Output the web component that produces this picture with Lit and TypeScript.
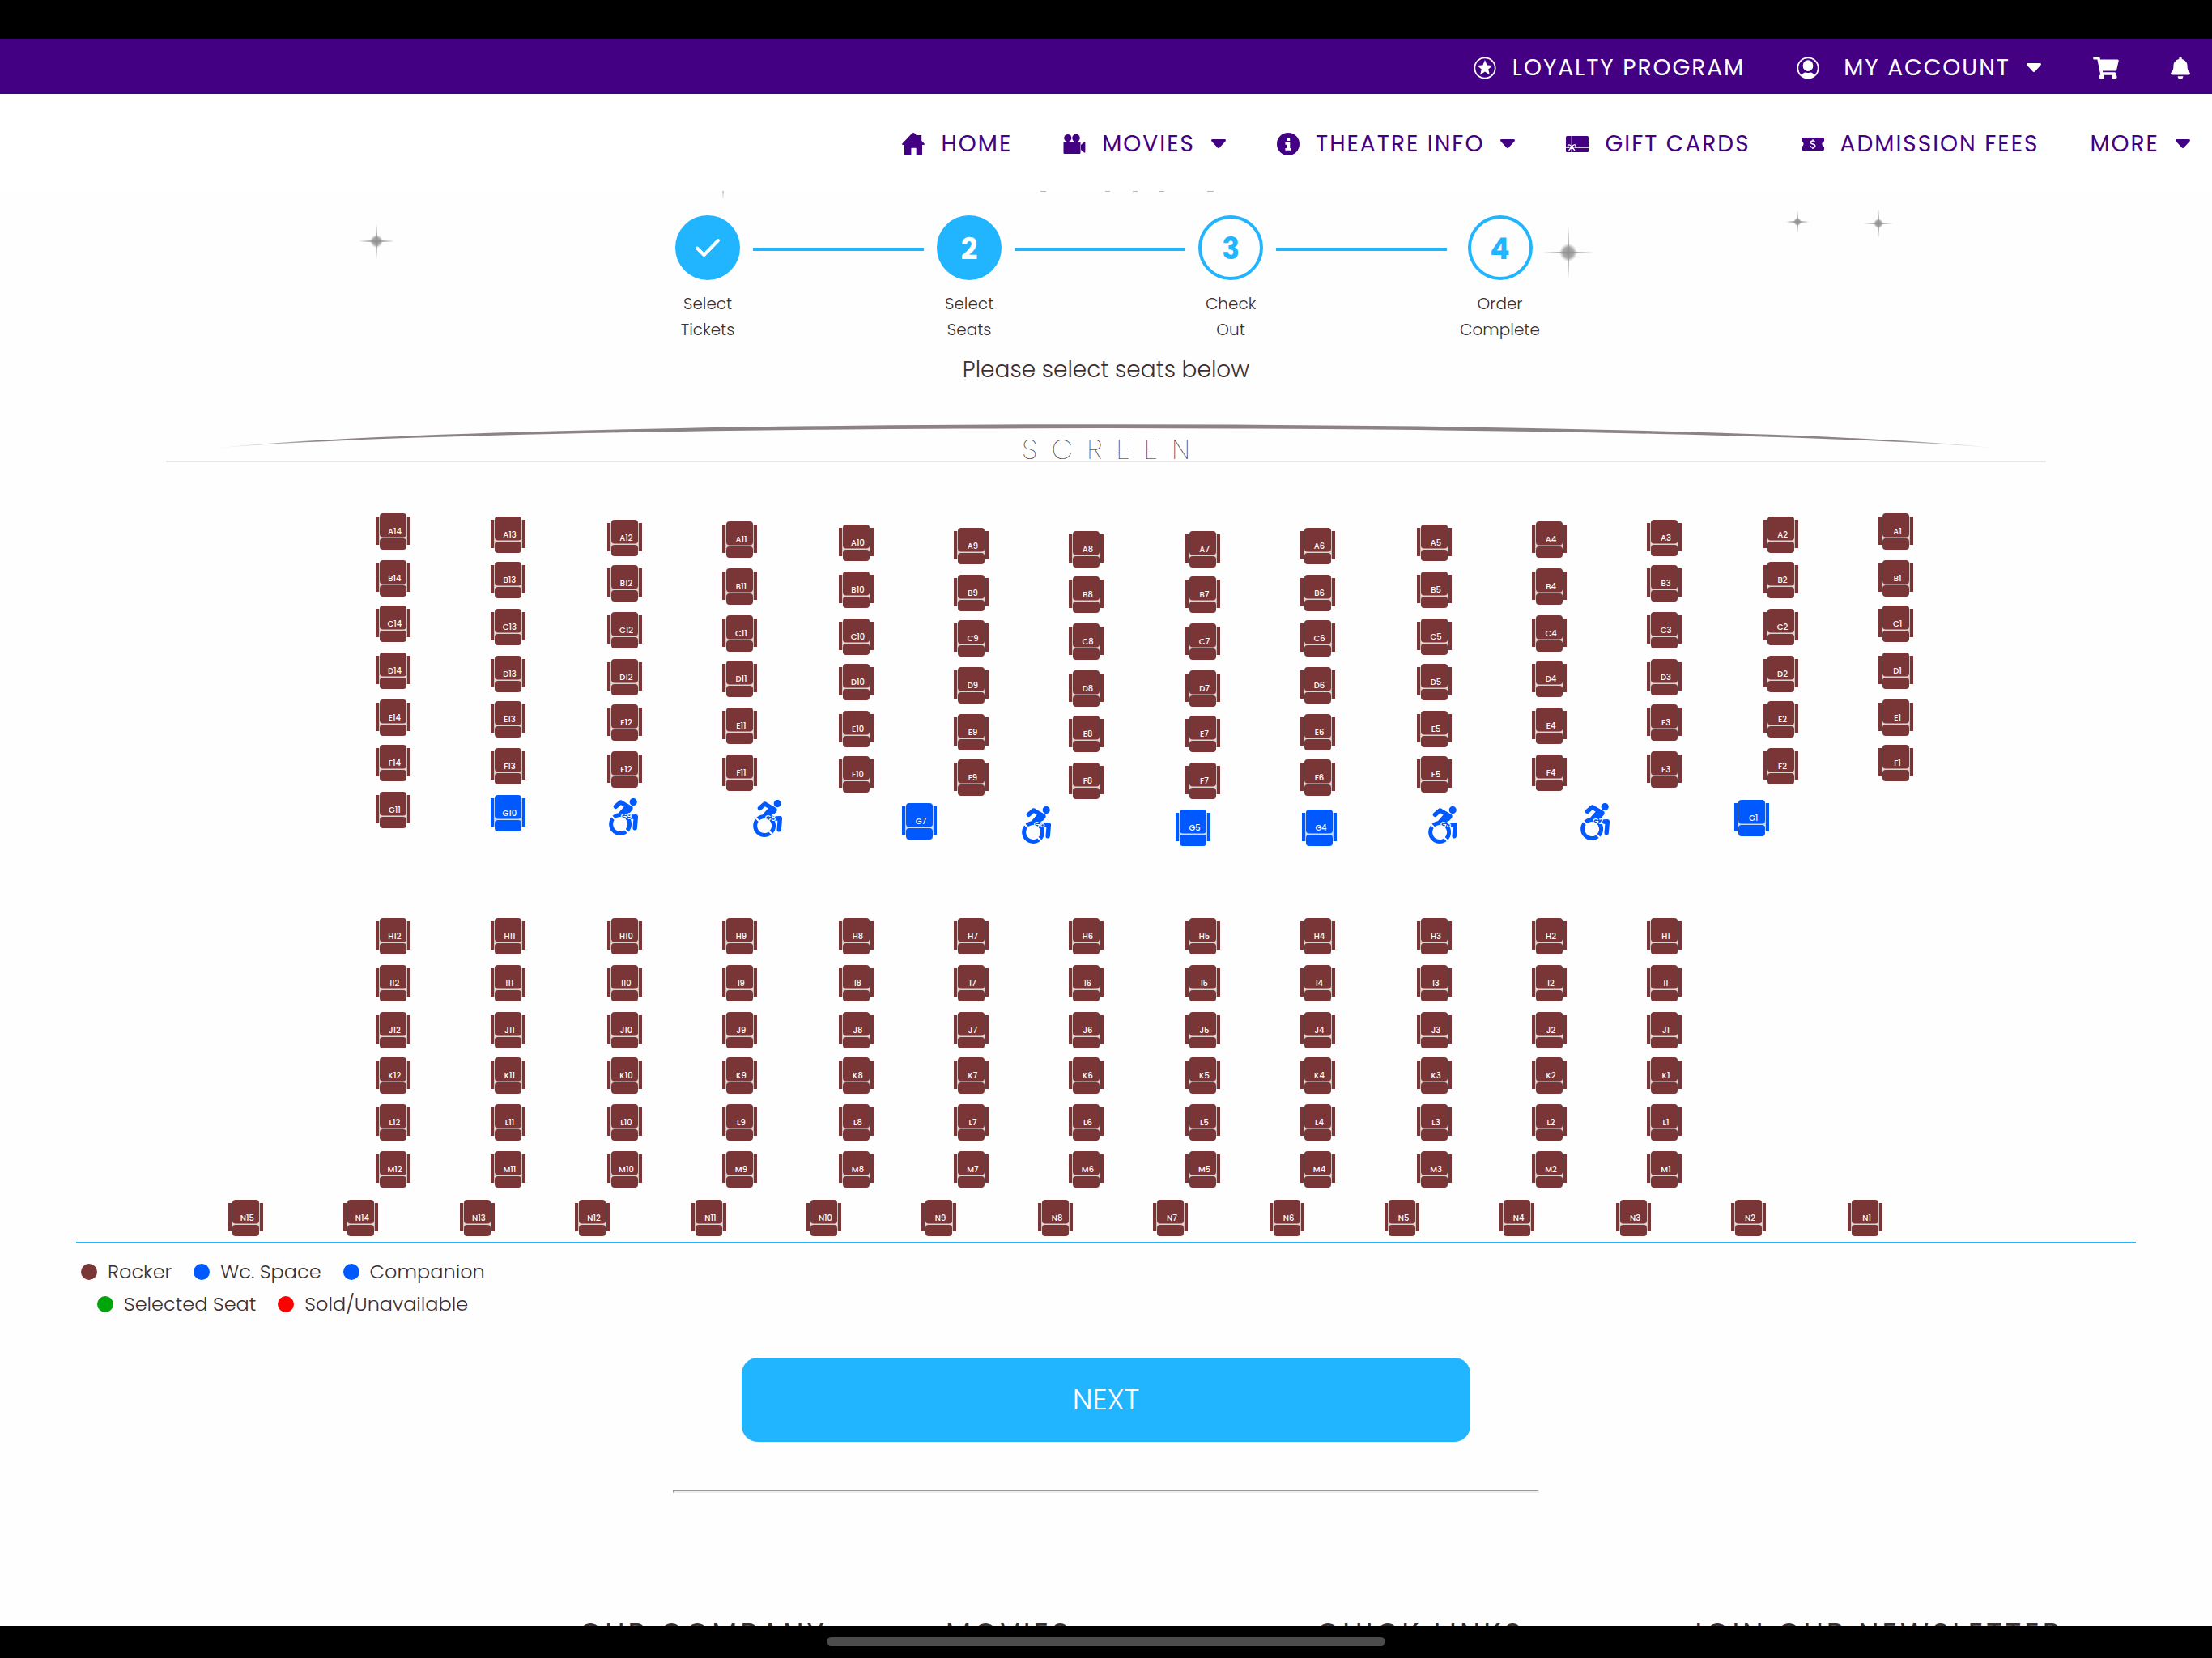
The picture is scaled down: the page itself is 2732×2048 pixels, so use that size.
import { LitElement, html, svg, css } from "lit";
import { customElement, property, state } from "lit/decorators.js";
import { classMap } from "lit/directives/class-map.js";
import { styleMap } from "lit/directives/style-map.js";

type SeatKind = "rocker" | "companion" | "wheelchair";

interface Seat {
  id: string;
  kind: SeatKind;
  x: number;
  y: number;
}

/* The plan is drawn on a floor 2544 units wide; x becomes a share of it. */
const PLAN_WIDTH = 2544;
const COLUMN_PITCH = 142.8;
const ROW_PITCH = 57.3;
const even = (n: number) => 2 * Math.round(n / 2);

function buildSeats(): Seat[] {
  const seats: Seat[] = [];
  "ABCDEF".split("").forEach((row, r) => {
    for (let i = 0; i < 14; i++) {
      const bow = 3.6 * Math.min(i, 13 - i);
      seats.push({
        id: `${row}${14 - i}`,
        kind: "rocker",
        x: even(370 + COLUMN_PITCH * i),
        y: even(24 + ROW_PITCH * r + bow),
      });
    }
  });
  const rowG: [number, SeatKind, number, number][] = [
    [11, "rocker", 370, 368],
    [10, "companion", 512, 372],
    [9, "wheelchair", 656, 376],
    [8, "wheelchair", 834, 378],
    [7, "companion", 1020, 382],
    [6, "wheelchair", 1166, 386],
    [5, "companion", 1358, 390],
    [4, "companion", 1514, 390],
    [3, "wheelchair", 1668, 386],
    [2, "wheelchair", 1856, 382],
    [1, "companion", 2048, 378],
  ];
  for (const [n, kind, x, y] of rowG) seats.push({ id: `G${n}`, kind, x, y });
  "HIJKLM".split("").forEach((row, r) => {
    for (let i = 0; i < 12; i++) {
      seats.push({
        id: `${row}${12 - i}`,
        kind: "rocker",
        x: even(370 + COLUMN_PITCH * i),
        y: even(524.7 + ROW_PITCH * r),
      });
    }
  });
  for (let i = 0; i < 15; i++) {
    seats.push({ id: `N${15 - i}`, kind: "rocker", x: even(188 + COLUMN_PITCH * i), y: 872 });
  }
  return seats;
}

const icons = {
  loyalty: svg`<svg class="i28" viewBox="0 0 28 28" aria-hidden="true">
    <circle cx="14" cy="14" r="12.7" fill="none" stroke="currentColor" stroke-width="1.8"/>
    <path fill="currentColor" d="M14 4l2.600 6.500 7 .5-5.400 4.500 1.700 6.900-5.900-3.800-5.900 3.800 1.700-6.900L4.400 11l7-.5z"/></svg>`,
  user: svg`<svg class="i28" viewBox="0 0 28 28" aria-hidden="true">
    <circle cx="14" cy="14" r="12.7" fill="none" stroke="currentColor" stroke-width="1.8"/>
    <ellipse cx="14" cy="11.200" rx="6.400" ry="6.900" fill="currentColor"/>
    <path fill="currentColor" d="M5.800 23.600c1-2.600 3.200-4.200 5-4.200 1 0 1.600.6 3.200.6s2.200-.6 3.200-.6c1.800 0 4 1.600 5 4.200C20 25.800 17.200 27 14 27s-6-1.200-8.200-3.400z"/></svg>`,
  cart: svg`<svg class="i32" viewBox="0 0 576 512" aria-hidden="true"><path fill="currentColor" d="M528.12 301.319l47.273-208C578.806 78.301 567.391 64 551.99 64H159.208l-9.166-44.81C147.758 8.021 137.93 0 126.529 0H24C10.745 0 0 10.745 0 24v16c0 13.255 10.745 24 24 24h69.883l70.248 343.435C147.325 417.1 136 435.222 136 456c0 30.928 25.072 56 56 56s56-25.072 56-56c0-15.674-6.447-29.835-16.824-40h209.647C430.447 426.165 424 440.326 424 456c0 30.928 25.072 56 56 56s56-25.072 56-56c0-22.172-12.888-41.332-31.579-50.405l5.517-24.276c3.413-15.018-8.002-29.319-23.403-29.319H218.117l-6.545-32h293.145c11.206 0 20.92-7.754 23.403-18.681z"/></svg>`,
  bell: svg`<svg class="i24" viewBox="0 0 448 512" aria-hidden="true"><path fill="currentColor" d="M224 512c35.32 0 63.97-28.65 63.97-64H160.03c0 35.35 28.65 64 63.97 64zm215.39-149.71c-19.32-20.76-55.47-51.99-55.47-154.29 0-77.7-54.48-139.9-127.94-155.16V32c0-17.67-14.32-32-31.98-32s-31.98 14.33-31.98 32v20.84C118.56 68.1 64.08 130.3 64.08 208c0 102.3-36.15 133.53-55.47 154.29-6 6.45-8.66 14.16-8.61 21.71.11 16.4 12.98 32 32.1 32h383.8c19.12 0 32-15.6 32.1-32 .05-7.55-2.61-15.27-8.61-21.71z"/></svg>`,
  home: svg`<svg class="i28" viewBox="0 0 28 28" aria-hidden="true"><path fill="currentColor" d="M14 0c.7 0 1.200.200 1.700.700L19 4.200V3h5.200v6.700l3.500 3.900c.5.600.2 1.400-.6 1.400H25v12c0 .6-.4 1-1 1h-6.300v-8.200c0-.6-.4-1-1-1h-4.300c-.6 0-1 .4-1 1V28H4c-.6 0-1-.4-1-1V15H.900c-.8 0-1.100-.8-.6-1.400L12.300.700C12.800.200 13.300 0 14 0z"/></svg>`,
  camera: svg`<svg class="i28" viewBox="0 0 28 28" aria-hidden="true"><g fill="currentColor">
    <circle cx="5.800" cy="6.600" r="4.600"/><circle cx="16" cy="6.600" r="4.800"/>
    <rect x="0.500" y="11" width="21" height="15" rx="1"/><path d="M22 15l4-3.600h1.400v13.200H26L22 21z"/></g></svg>`,
  info: svg`<svg class="i28" viewBox="0 0 28 28" aria-hidden="true"><circle cx="14" cy="14" r="14" fill="currentColor"/>
    <path fill="#fff" d="M12 6h4.200v4H12zM10.400 12h5.900v7h1.700v2.800h-7.600V19h1.800v-4.200h-1.800z"/></svg>`,
  gift: svg`<svg class="i28" viewBox="0 0 28 28" aria-hidden="true"><rect x="0" y="4" width="28" height="20" rx="1.500" fill="currentColor"/>
    <path fill="none" stroke="#fff" stroke-width="1.200" d="M7.300 4v11M0 18.200h4M11 18.200h17"/>
    <g fill="none" stroke="#fff" stroke-width="1.300"><path d="M7 17.500c-1-3-4.600-3.600-4.600-1.200 0 1.800 2.800 2 4.600 1.200zM7.600 17.500c1-3 4.600-3.600 4.600-1.200 0 1.800-2.800 2-4.600 1.200zM6.600 18l-3 4M8 18l3 4M7.300 18v6"/></g></svg>`,
  ticket: svg`<svg class="i28" viewBox="0 0 28 28" aria-hidden="true"><path fill="currentColor" d="M1.500 6h25c.8 0 1.500.6 1.500 1.400v3.200c-3.400.8-3.400 6 0 6.800v3.200c0 .8-.7 1.400-1.500 1.400h-25C.700 22 0 21.400 0 20.600v-3.200c3.400-.8 3.400-6 0-6.800V7.400C0 6.600.700 6 1.500 6z"/>
    <path fill="none" stroke="#fff" stroke-width="1.400" d="M16.600 11.800c-.4-1.200-1.300-1.800-2.600-1.800-1.500 0-2.600.8-2.600 2 0 2.800 5.400 1.200 5.400 4.200 0 1.200-1.200 2-2.800 2-1.500 0-2.500-.7-2.900-2M14 8.200V10M14 18.200V20"/></svg>`,
  caret: svg`<svg class="caret" viewBox="0 0 18 11" aria-hidden="true"><path fill="currentColor" d="M1.500 0h15c1.300 0 2 1.400 1 2.400L10.200 10.500c-.7.700-1.700.7-2.400 0L.5 2.400C-.5 1.400.2 0 1.500 0z"/></svg>`,
  check: svg`<svg class="i32" viewBox="0 0 32 24" aria-hidden="true"><path fill="none" stroke="#fff" stroke-width="4" stroke-linecap="round" stroke-linejoin="round" d="M3 12.500l8.500 8.500L29 3"/></svg>`,
};

const wheelchairPath =
  "M423.9 255.8L411 413.1c-3.3 40.7-63.9 35.1-60.6-4.9l10-122.5-41.1 2.3c10.1 20.7 15.8 43.9 15.8 68.5 0 41.2-16.1 78.7-42.3 106.5l-39.3-39.3c57.9-63.7 13.1-167.2-74-167.2-25.9 0-49.5 9.9-67.2 26L73 243.2c22-20.7 50.1-35.1 81.4-40.2l75.3-85.7-42.6-24.8-51.6 46c-30 26.8-70.6-18.5-40.5-45.4l68-60.7c9.8-8.8 24.1-10.2 35.5-3.6 0 0 139.3 80.9 139.5 81.1 16.2 10.1 20.7 36 6.1 52.6L285.7 229l106.1-5.9c18.5-1.1 33.6 14.4 32.1 32.7zm-64.9-154c28.1 0 50.9-22.8 50.9-50.9C409.9 22.8 387.1 0 359 0c-28.1 0-50.9 22.8-50.9 50.9 0 28.1 22.8 50.9 50.9 50.9zM179.6 456.5c-80.6 0-127.4-90.6-82.7-156.1l-39.7-39.7C36.4 287 24 320.3 24 356.4c0 130.7 150.7 201.4 251.4 122.5l-39.7-39.7c-16 10.9-35.3 17.3-56.1 17.3z";

@customElement("theatre-seat")
export class TheatreSeat extends LitElement {
  @property() label = "";
  @property() kind: SeatKind = "rocker";
  @property({ type: Boolean }) selected = false;

  static styles = css`
    :host {
      display: block;
      width: 44px;
      height: 46px;
    }
    .seat {
      display: block;
      position: relative;
      width: 100%;
      height: 100%;
      padding: 0;
      border: 0;
      background: none;
      cursor: pointer;
      color: #7a3636;
    }
    .accessible {
      color: #0059ff;
    }
    .selected {
      color: #00a50b;
    }
    .shape {
      display: block;
      width: 44px;
      height: 46px;
    }
    .label {
      position: absolute;
      left: 3px;
      right: 0;
      top: 16px;
      font: 500 10px/14px Poppins, Inter, sans-serif;
      text-align: center;
      color: #fff;
    }
  `;

  render() {
    const chair = this.kind === "wheelchair";
    return html`<button
      class=${classMap({ seat: true, accessible: this.kind !== "rocker", selected: this.selected })}
      aria-pressed=${this.selected}
    >
      ${chair
        ? svg`<svg class="shape" viewBox="0 0 44 46" aria-hidden="true">
            <g transform="scale(.0898)"><path fill="currentColor" d=${wheelchairPath}/></g></svg>`
        : svg`<svg class="shape" viewBox="0 0 44 46" aria-hidden="true">
            <rect x="4" y="4" width="35" height="35" fill="currentColor" opacity=".3"/>
            <rect x="5" y="26" width="33" height="8" fill="#fff" opacity=".3"/>
            <g fill="currentColor">
              <rect x="0" y="4" width="4" height="35"/><rect x="39" y="4" width="4" height="35"/>
              <rect x="5" y="0" width="33" height="29.500" rx="4"/>
              <rect x="5" y="31" width="33" height="14" rx="4"/>
            </g></svg>`}
      <span class="label">${this.label}</span>
    </button>`;
  }
}

@customElement("app-root")
export class AppRoot extends LitElement {
  @state() private selected = new Set<string>();
  private seats = buildSeats();

  static styles = css`
    :host {
      display: flex;
      flex-direction: column;
      height: 100vh;
      overflow: hidden;
      background: #fefefe;
      color: #3b2f30;
      font-family: Poppins, Inter, sans-serif;
      font-weight: 300;
    }
    a {
      color: inherit;
      text-decoration: none;
    }
    button {
      font: inherit;
      letter-spacing: inherit;
      color: inherit;
    }
    .device-top {
      flex: none;
      height: 48px;
      background: #000;
    }
    .account-bar,
    .main-nav {
      display: flex;
      flex: none;
      align-items: center;
      justify-content: flex-end;
      gap: 64px;
      box-sizing: border-box;
      padding: 3px 27px 0;
      font-size: 28px;
      font-weight: 400;
      letter-spacing: 2px;
    }
    .account-bar {
      height: 68px;
      background: #440082;
      color: #fff;
    }
    .main-nav {
      gap: 63px;
      height: 120px;
      background: #fff;
      color: #440082;
    }
    .item {
      display: flex;
      align-items: center;
      gap: 20px;
      padding: 0;
      border: 0;
      background: none;
      white-space: nowrap;
    }
    .account-name {
      padding-left: 10px;
    }
    .i28 {
      width: 28px;
      height: 28px;
    }
    .i32 {
      width: 32px;
      height: 28px;
    }
    .i24 {
      width: 24px;
      height: 28px;
    }
    .caret {
      width: 18px;
      height: 11px;
    }
    .page {
      position: relative;
      flex: 1;
      min-height: 0;
      overflow: hidden;
      display: flex;
      flex-direction: column;
      align-items: center;
    }
    .page > * {
      flex-shrink: 0;
    }
    .sky {
      position: absolute;
      left: 0;
      top: 0;
      width: 100%;
      height: 140px;
    }
    .steps {
      display: flex;
      align-items: flex-start;
      gap: 16px;
      margin: 30px 0 0;
      padding: 0 0 0 4px;
      list-style: none;
    }
    .step {
      display: flex;
      flex-direction: column;
      align-items: center;
      gap: 13px;
      min-width: 80px;
      font-size: 20px;
      line-height: 32px;
      text-align: center;
    }
    .badge {
      display: grid;
      place-items: center;
      box-sizing: border-box;
      width: 80px;
      height: 80px;
      border: 4px solid #21b4ff;
      border-radius: 50%;
      font-size: 36px;
      font-weight: 700;
      color: #21b4ff;
    }
    .number {
      padding-top: 3px;
    }
    .filled {
      background: #21b4ff;
      color: #fff;
    }
    .link {
      width: 211px;
      height: 4px;
      margin-top: 40px;
      background: #21b4ff;
    }
    .prompt {
      margin: 14px 0 0;
      font-size: 28px;
      font-weight: 300;
      line-height: 40px;
    }
    .screen {
      display: flex;
      flex-direction: column;
      align-items: center;
      box-sizing: border-box;
      width: 85%;
      margin-top: 47px;
      border-bottom: 2px solid #e6e6e6;
      color: #2a2021;
      font-size: 34px;
      font-weight: 200;
      line-height: 28px;
      letter-spacing: 18px;
      text-indent: 18px;
    }
    .arc {
      width: 95%;
      height: 30px;
      margin-bottom: -13px;
    }
    .floor {
      position: relative;
      width: 93.125%;
      height: 924px;
      margin-top: 39px;
      border-bottom: 2px solid #21b4ff;
    }
    .place {
      position: absolute;
    }
    .legend {
      display: grid;
      width: 93.125%;
      box-sizing: border-box;
      margin-top: 15px;
      padding-left: 6px;
      font-size: 24px;
      line-height: 40px;
    }
    .legend-row {
      display: flex;
      gap: 27px;
    }
    .indented {
      padding-left: 20px;
    }
    .key {
      display: flex;
      align-items: center;
      gap: 13px;
    }
    .dot {
      width: 20px;
      height: 20px;
      border-radius: 50%;
      background: #7a3636;
    }
    .blue {
      background: #0059ff;
    }
    .green {
      background: #00a50b;
    }
    .red {
      background: #f00;
    }
    .next {
      width: 900px;
      height: 104px;
      margin-top: 46px;
      padding: 0 0 2px;
      border: 0;
      border-radius: 20px;
      background: #21b4ff;
      color: #fff;
      font-size: 36px;
      font-weight: 300;
    }
    .rule {
      width: 1066px;
      height: 0;
      margin: 59px 0 0;
      border: 2px solid #999;
      border-bottom-color: #eee;
      border-right-color: #eee;
    }
    .footer {
      display: grid;
      grid-template-columns: 453px 458px 458px auto;
      align-self: stretch;
      margin-top: 154px;
      padding-left: 715px;
      font-size: 36px;
      line-height: 40px;
      letter-spacing: 4px;
      white-space: nowrap;
    }
    .footer-title {
      margin: 0;
      font-size: inherit;
      font-weight: 400;
    }
    .device-bottom {
      display: flex;
      flex: none;
      justify-content: center;
      height: 40px;
      padding-top: 14px;
      box-sizing: border-box;
      background: #000;
    }
    .handle {
      width: 690px;
      height: 11px;
      border-radius: 6px;
      background: #4c4c4c;
    }
  `;

  private toggle(id: string) {
    const next = new Set(this.selected);
    next.has(id) ? next.delete(id) : next.add(id);
    this.selected = next;
  }

  private star(x: number, y: number, arm: number, core: number) {
    return svg`<g transform="translate(${x} ${y})">
      <circle r=${core} fill="url(#glow)"/>
      <path fill="#8f8f8f" opacity=".7" d="M0 ${-arm}L1.500 0L0 ${arm}L-1.500 0zM${-arm} 0L0 -1.500L${arm} 0L0 1.500z"/>
    </g>`;
  }

  render() {
    return html`
      <div class="device-top"></div>
      <nav class="account-bar" aria-label="Account">
        <a class="item" href="#loyalty">${icons.loyalty}<span>LOYALTY PROGRAM</span></a>
        <button class="item">${icons.user}<span class="account-name">MY ACCOUNT</span>${icons.caret}</button>
        <a class="item" href="#cart" aria-label="Cart">${icons.cart}</a>
        <a class="item" href="#alerts" aria-label="Notifications">${icons.bell}</a>
      </nav>
      <nav class="main-nav" aria-label="Main">
        <a class="item" href="#home">${icons.home}<span>HOME</span></a>
        <button class="item">${icons.camera}<span>MOVIES</span>${icons.caret}</button>
        <button class="item">${icons.info}<span>THEATRE INFO</span>${icons.caret}</button>
        <a class="item" href="#gift">${icons.gift}<span>GIFT CARDS</span></a>
        <a class="item" href="#fees">${icons.ticket}<span>ADMISSION FEES</span></a>
        <button class="item"><span>MORE</span>${icons.caret}</button>
      </nav>
      <main class="page">
        <svg class="sky" viewBox="0 0 2732 140" preserveAspectRatio="xMidYMin slice" aria-hidden="true">
          <defs>
            <radialGradient id="glow">
              <stop offset="0" stop-color="#999"/><stop offset=".6" stop-color="#aaa"/>
              <stop offset="1" stop-color="#bbb" stop-opacity="0"/>
            </radialGradient>
          </defs>
          ${this.star(465, 62, 22, 8)} ${this.star(893, -12, 22, 8)} ${this.star(1937, 76, 32, 11)}
          ${this.star(2220, 38, 14, 5)} ${this.star(2320, 40, 18, 6)}
          <path stroke="#999" stroke-width="1" opacity=".7" d="M1285 .5h7M1365 .5h6M1399 .5h6M1432 .5h6M1491 .5h8"/>
        </svg>
        <ol class="steps">
          <li class="step"><span class="badge filled">${icons.check}</span><span>Select<br />Tickets</span></li>
          <li class="link" role="presentation"></li>
          <li class="step"><span class="badge number filled">2</span><span>Select<br />Seats</span></li>
          <li class="link" role="presentation"></li>
          <li class="step"><span class="badge number">3</span><span>Check<br />Out</span></li>
          <li class="link" role="presentation"></li>
          <li class="step"><span class="badge number">4</span><span>Order<br />Complete</span></li>
        </ol>
        <h2 class="prompt">Please select seats below</h2>
        <div class="screen">
          <svg class="arc" viewBox="0 0 2208 30" preserveAspectRatio="none" aria-hidden="true">
            <defs>
              <linearGradient id="fade">
                <stop offset="0" stop-color="#8c8484" stop-opacity="0"/><stop offset=".06" stop-color="#8c8484"/>
                <stop offset=".94" stop-color="#8c8484"/><stop offset="1" stop-color="#8c8484" stop-opacity="0"/>
              </linearGradient>
            </defs>
            <path fill="url(#fade)" d="M0 30A1160 43 0 0 1 2208 30A1160 36 0 0 0 0 30z"/>
          </svg>
          <span>SCREEN</span>
        </div>
        <section class="floor" aria-label="Seating plan">
          ${this.seats.map(
            (s) => html`<theatre-seat
              class="place"
              style=${styleMap({ left: `${(s.x / PLAN_WIDTH) * 100}%`, top: `${s.y}px` })}
              .label=${s.id}
              .kind=${s.kind}
              ?selected=${this.selected.has(s.id)}
              @click=${() => this.toggle(s.id)}
            ></theatre-seat>`
          )}
        </section>
        <div class="legend">
          <div class="legend-row">
            <span class="key"><i class="dot"></i>Rocker</span>
            <span class="key"><i class="dot blue"></i>Wc. Space</span>
            <span class="key"><i class="dot blue"></i>Companion</span>
          </div>
          <div class="legend-row indented">
            <span class="key"><i class="dot green"></i>Selected Seat</span>
            <span class="key"><i class="dot red"></i>Sold/Unavailable</span>
          </div>
        </div>
        <button class="next">NEXT</button>
        <hr class="rule" />
        <footer class="footer">
          <h3 class="footer-title">OUR COMPANY</h3>
          <h3 class="footer-title">MOVIES</h3>
          <h3 class="footer-title">QUICK LINKS</h3>
          <h3 class="footer-title">JOIN OUR NEWSLETTER</h3>
        </footer>
      </main>
      <div class="device-bottom"><div class="handle"></div></div>
    `;
  }
}
